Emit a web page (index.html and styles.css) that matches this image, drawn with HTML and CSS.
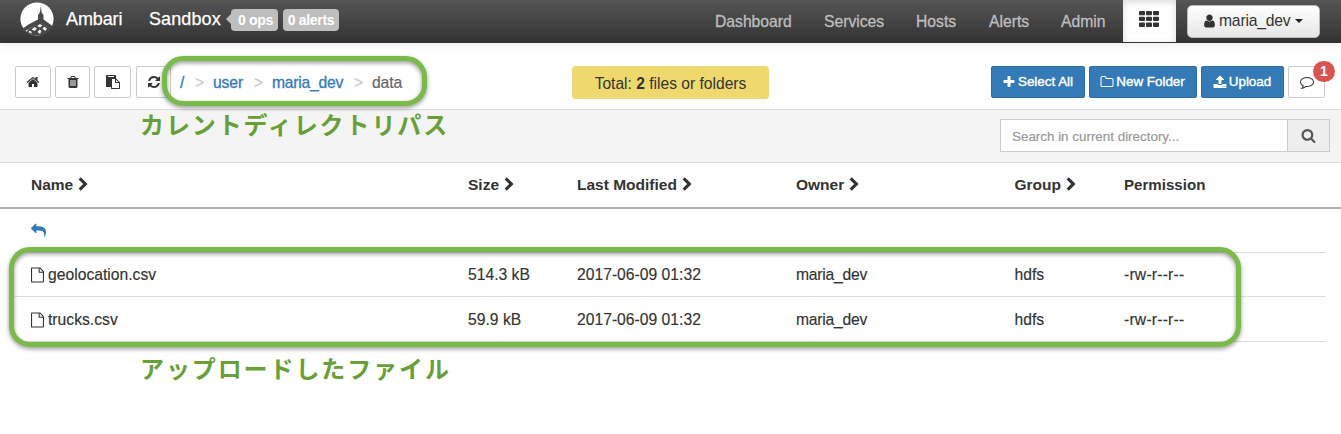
FILE: index.html
```html
<!DOCTYPE html>
<html lang="ja">
<head>
<meta charset="utf-8">
<title>Ambari</title>
<link rel="stylesheet" href="styles.css">
</head>
<body>
<svg class="defs" width="0" height="0">
<symbol id="home" viewBox="0 0 1792 1792"><path d="M1472 992v480q0 26-19 45t-45 19h-384v-384h-256v384h-384q-26 0-45-19t-19-45v-480q0-1 .5-3t.5-3l575-474 575 474q1 2 1 6zm223-69l-62 74q-8 9-21 11h-3q-13 0-21-7l-692-577-692 577q-12 8-24 7-13-2-21-11l-62-74q-8-10-7-23.5t11-21.5l719-599q32-26 76-26t76 26l244 204v-195q0-14 9-23t23-9h192q14 0 23 9t9 23v408l219 182q10 8 11 21.5t-7 23.5z"/></symbol>
<symbol id="trash" viewBox="0 0 1792 1792"><path d="M704 1376v-704q0-14-9-23t-23-9h-64q-14 0-23 9t-9 23v704q0 14 9 23t23 9h64q14 0 23-9t9-23zm256 0v-704q0-14-9-23t-23-9h-64q-14 0-23 9t-9 23v704q0 14 9 23t23 9h64q14 0 23-9t9-23zm256 0v-704q0-14-9-23t-23-9h-64q-14 0-23 9t-9 23v704q0 14 9 23t23 9h64q14 0 23-9t9-23zm-544-992h448l-48-117q-7-9-17-11h-317q-10 2-17 11zm928 32v64q0 14-9 23t-23 9h-96v948q0 83-47 143.5t-113 60.5h-832q-66 0-113-58.5t-47-141.5v-952h-96q-14 0-23-9t-9-23v-64q0-14 9-23t23-9h309l70-167q15-37 54-63t79-26h320q40 0 79 26t54 63l70 167h309q14 0 23 9t9 23z"/></symbol>
<symbol id="paste" viewBox="0 0 1792 1792"><path d="M768 1664h896v-640h-416q-40 0-68-28t-28-68v-416h-384v1152zm256-1440v-64q0-13-9.5-22.5t-22.5-9.5h-704q-13 0-22.5 9.5t-9.5 22.5v64q0 13 9.5 22.5t22.5 9.5h704q13 0 22.5-9.5t9.5-22.5zm256 672h299l-299-299v299zm512 128v672q0 40-28 68t-68 28h-960q-40 0-68-28t-28-68v-160h-544q-40 0-68-28t-28-68v-1344q0-40 28-68t68-28h1088q40 0 68 28t28 68v328q21 13 36 28l408 408q28 28 48 76t20 88z"/></symbol>
<symbol id="refresh" viewBox="0 0 1792 1792"><path d="M1639 1056q0 5-1 7-64 268-268 434.5t-478 166.5q-146 0-282.5-55t-243.5-157l-129 129q-19 19-45 19t-45-19-19-45v-448q0-26 19-45t45-19h448q26 0 45 19t19 45-19 45l-137 137q71 66 161 102t187 36q134 0 250-65t186-179q11-17 53-117 8-23 30-23h192q13 0 22.5 9.5t9.5 22.5zm25-800v448q0 26-19 45t-45 19h-448q-26 0-45-19t-19-45 19-45l138-138q-148-137-349-137-134 0-250 65t-186 179q-11 17-53 117-8 23-30 23h-199q-13 0-22.5-9.5t-9.5-22.5v-7q65-268 270-434.5t480-166.5q146 0 284 55.5t245 156.5l130-129q19-19 45-19t45 19 19 45z"/></symbol>
<symbol id="plus" viewBox="0 0 1792 1792"><path d="M1600 736v192q0 40-28 68t-68 28h-416v416q0 40-28 68t-68 28h-192q-40 0-68-28t-28-68v-416h-416q-40 0-68-28t-28-68v-192q0-40 28-68t68-28h416v-416q0-40 28-68t68-28h192q40 0 68 28t28 68v416h416q40 0 68 28t28 68z"/></symbol>
<symbol id="folder" viewBox="0 0 1792 1792"><path d="M1600 1312v-704q0-40-28-68t-68-28h-704q-40 0-68-28t-28-68v-64q0-40-28-68t-68-28h-320q-40 0-68 28t-28 68v960q0 40 28 68t68 28h1216q40 0 68-28t28-68zm128-704v704q0 92-66 158t-158 66h-1216q-92 0-158-66t-66-158v-960q0-92 66-158t158-66h320q92 0 158 66t66 158v32h672q92 0 158 66t66 158z"/></symbol>
<symbol id="upload" viewBox="0 0 1792 1792"><path d="M1344 1472q0-26-19-45t-45-19-45 19-19 45 19 45 45 19 45-19 19-45zm256 0q0-26-19-45t-45-19-45 19-19 45 19 45 45 19 45-19 19-45zm128-224v320q0 40-28 68t-68 28h-1472q-40 0-68-28t-28-68v-320q0-40 28-68t68-28h427q21 56 70.5 92t110.5 36h256q61 0 110.5-36t70.5-92h427q40 0 68 28t28 68zm-325-648q-17 40-59 40h-256v448q0 26-19 45t-45 19h-256q-26 0-45-19t-19-45v-448h-256q-42 0-59-40-17-39 14-69l448-448q18-19 45-19t45 19l448 448q31 30 14 69z"/></symbol>
<symbol id="search" viewBox="0 0 1792 1792"><path d="M1216 832q0-185-131.5-316.5t-316.5-131.5-316.5 131.5-131.5 316.5 131.5 316.5 316.5 131.5 316.5-131.5 131.5-316.5zm512 832q0 52-38 90t-90 38q-54 0-90-38l-343-342q-179 124-399 124-143 0-273.5-55.5t-225-150-150-225-55.5-273.5 55.5-273.5 150-225 225-150 273.5-55.5 273.5 55.5 225 150 150 225 55.5 273.5q0 220-124 399l343 343q37 37 37 90z"/></symbol>
<symbol id="comment" viewBox="0 0 1792 1792"><path d="M896 384q-204 0-381.5 69.5t-282 187.5-104.5 255q0 112 71.5 213.5t201.5 175.5l87 50-27 96q-24 91-70 172 152-63 275-171l43-38 57 6q69 8 130 8 204 0 381.5-69.5t282-187.5 104.5-255-104.5-255-282-187.5-381.5-69.5zm896 512q0 174-120 321.5t-326 233-450 85.5q-70 0-145-8-198 175-460 242-49 14-114 22h-5q-15 0-27-10.5t-16-27.5v-1q-3-4-.5-12t2-10 4.5-9.5l6-9 7-8.5 8-9q7-8 31-34.5t34.5-38 31-39.5 32.5-51 27-59 26-76q-157-89-247.5-220t-90.5-281q0-174 120-321.5t326-233 450-85.5 450 85.5 326 233 120 321.5z"/></symbol>
<symbol id="user" viewBox="0 0 1792 1792"><path d="M1536 1399q0 109-62.5 187t-150.5 78h-854q-88 0-150.5-78t-62.5-187q0-85 8.5-160.5t31.5-152 58.5-131 94-89 134.5-34.5q131 128 313 128t313-128q76 0 134.5 34.5t94 89 58.5 131 31.5 152 8.5 160.5zm-256-887q0 159-112.5 271.5t-271.5 112.5-271.5-112.5-112.5-271.5 112.5-271.5 271.5-112.5 271.5 112.5 112.5 271.5z"/></symbol>
<symbol id="reply" viewBox="0 0 1792 1792"><path d="M1792 1120q0 166-127 451-3 7-10.5 24t-13.5 30-13 22q-12 17-28 17-15 0-23.5-10t-8.5-25q0-9 2.5-26.5t2.5-23.5q5-68 5-123 0-101-17.5-181t-48.5-138.5-80-101-105.5-69.5-133-42.5-154-21.5-175.5-6h-224v256q0 26-19 45t-45 19-45-19l-512-512q-19-19-19-45t19-45l512-512q19-19 45-19t45 19 19 45v256h224q713 0 875 403 53 134 53 333z"/></symbol>
<symbol id="file" viewBox="128 0 1536 1792"><path d="M1596 380q28 28 48 76t20 88v1152q0 40-28 68t-68 28h-1344q-40 0-68-28t-28-68v-1600q0-40 28-68t68-28h896q40 0 88 20t76 48zm-444-244v376h376q-10-29-22-41l-313-313q-12-12-41-22zm384 1528v-1024h-416q-40 0-68-28t-28-68v-416h-768v1536h1280z"/></symbol>
<symbol id="chev" viewBox="0 0 10 14"><path d="M.6 2.4 2.8.3 9.6 7 2.8 13.7.6 11.600 5.200 7z"/></symbol>
<symbol id="grid" viewBox="0 0 20 16"><path d="M1 0h4a1 1 0 0 1 1 1v2.300a1 1 0 0 1-1 1H1a1 1 0 0 1-1-1V1a1 1 0 0 1 1-1zM8 0h4a1 1 0 0 1 1 1v2.300a1 1 0 0 1-1 1H8a1 1 0 0 1-1-1V1a1 1 0 0 1 1-1zM15 0h4a1 1 0 0 1 1 1v2.300a1 1 0 0 1-1 1h-4a1 1 0 0 1-1-1V1a1 1 0 0 1 1-1zM1 5.800h4a1 1 0 0 1 1 1v2.300a1 1 0 0 1-1 1H1a1 1 0 0 1-1-1V6.800a1 1 0 0 1 1-1zM8 5.800h4a1 1 0 0 1 1 1v2.300a1 1 0 0 1-1 1H8a1 1 0 0 1-1-1V6.800a1 1 0 0 1 1-1zM15 5.800h4a1 1 0 0 1 1 1v2.300a1 1 0 0 1-1 1h-4a1 1 0 0 1-1-1V6.800a1 1 0 0 1 1-1zM1 11.600h4a1 1 0 0 1 1 1v2.300a1 1 0 0 1-1 1H1a1 1 0 0 1-1-1v-2.300a1 1 0 0 1 1-1zM8 11.600h4a1 1 0 0 1 1 1v2.300a1 1 0 0 1-1 1H8a1 1 0 0 1-1-1v-2.300a1 1 0 0 1 1-1zM15 11.600h4a1 1 0 0 1 1 1v2.300a1 1 0 0 1-1 1h-4a1 1 0 0 1-1-1v-2.300a1 1 0 0 1 1-1z"/></symbol>
</svg>

<header class="navbar">
  <svg class="logo" viewBox="0 0 34 34">
    <circle cx="17" cy="17" r="16.600" fill="#fff"/>
    <path d="M20.900 4 21.600 10.500 23.500 13v4.500L32.500 24l-1.500 3-9.500-6.500L10 26l-6 4-2-3 6.500-4.500 9.500-5V13l1.900-2.500z" fill="#484848"/>
    <path d="M21 20 31 26.500l-3.500 4L22 33.500h-8L6 30.500l3-4 6-3.500z" fill="#484848"/>
    <path d="m20 22 2.500 1.500L20 25.500l-3-1.500zM14.500 25l2.500 1.500-2.500 2.500-3-1.500zM24 24.500l3 2-1.500 2.500-3-2zM19.500 27.500l2 1.500-1.500 3-2.500-2zM9.500 28.500l2.500 1.500-1 1.500-2.500-1.500z" fill="#eee"/>
  </svg>
  <span class="brand">Ambari</span>
  <span class="cluster">Sandbox</span>
  <span class="label ops">0 ops</span>
  <span class="label">0 alerts</span>
  <nav class="links">
    <a class="dash">Dashboard</a><a class="serv">Services</a><a class="host">Hosts</a><a class="alrt">Alerts</a><a class="admn">Admin</a>
  </nav>
  <div class="views"><svg><use href="#grid"/></svg></div>
  <button class="account"><svg><use href="#user"/></svg><span>maria_dev</span><i class="caret"></i></button>
</header>

<section class="toolbar">
  <div class="tools">
    <button class="btn b1"><svg><use href="#home"/></svg></button>
    <button class="btn b2"><svg><use href="#trash"/></svg></button>
    <button class="btn b3"><svg><use href="#paste"/></svg></button>
    <button class="btn b4"><svg><use href="#refresh"/></svg></button>
  </div>
  <div class="crumbs"><a class="root">/</a><i>&gt;</i><a class="c-user">user</a><i>&gt;</i><a class="c-maria">maria_dev</a><i>&gt;</i><span>data</span></div>
  <div class="total"><span>Total: <b>2</b> files or folders</span></div>
  <div class="actions">
    <button class="btn primary sel"><svg><use href="#plus"/></svg>Select All</button>
    <button class="btn primary fold"><svg><use href="#folder"/></svg>New Folder</button>
    <button class="btn primary upl"><svg><use href="#upload"/></svg>Upload</button>
    <button class="btn msg"><svg><use href="#comment"/></svg><em class="badge">1</em></button>
  </div>
  <div class="callout callout-path"></div>
</section>

<section class="searchbar">
  <p class="note note-path">カレントディレクトリパス</p>
  <div class="search"><span class="field">Search in current directory...</span><span class="addon"><svg><use href="#search"/></svg></span></div>
</section>

<main class="files">
  <div class="row head">
    <span>Name<svg><use href="#chev"/></svg></span><span>Size<svg><use href="#chev"/></svg></span><span>Last Modified<svg><use href="#chev"/></svg></span><span>Owner<svg><use href="#chev"/></svg></span><span>Group<svg><use href="#chev"/></svg></span><span class="perm">Permission</span>
  </div>
  <div class="list">
    <div class="row up"><svg><use href="#reply"/></svg></div>
    <div class="row first"><span><svg><use href="#file"/></svg>geolocation.csv</span><span>514.3 kB</span><span>2017-06-09 01:32</span><span class="owner">maria_dev</span><span>hdfs</span><span class="mode">-rw-r--r--</span></div>
    <div class="row second"><span><svg><use href="#file"/></svg>trucks.csv</span><span>59.9 kB</span><span>2017-06-09 01:32</span><span class="owner">maria_dev</span><span>hdfs</span><span class="mode">-rw-r--r--</span></div>
    <div class="callout callout-files"></div>
  </div>
  <p class="note note-files">アップロードしたファイル</p>
</main>
</body>
</html>
```
FILE: styles.css
```css
* { box-sizing: border-box; }
body { margin: 0; height: 434px; overflow: hidden; background: #fff; color: #333; font-family: "Liberation Sans", Arial, sans-serif; font-size: 15.700px; }
svg { fill: currentColor; flex: none; }
.defs { position: absolute; }
button { font-family: inherit; margin: 0; }
p { margin: 0; }
span, a { white-space: nowrap; }

.navbar { position: relative; display: flex; align-items: center; height: 43px; padding: 0 21px 4px 20px; background: linear-gradient(#555, #333); box-shadow: 0 1px 8px rgba(0,0,0,.1); color: #fff; }
.logo { width: 34px; height: 34px; margin-top: -2px; }
.brand { width: 83px; margin-left: 12px; font-size: 18px; letter-spacing: -.1px; -webkit-text-stroke: .25px; }
.cluster { width: 82px; font-size: 18px; letter-spacing: .1px; -webkit-text-stroke: .25px; }
.label { height: 22px; width: 56px; border-radius: 4px; background: #bebebe; font-size: 14px; font-weight: bold; line-height: 23px; text-align: center; letter-spacing: -.3px; }
.ops { position: relative; width: 47px; margin-right: 5px; padding-left: 2px; }
.ops::before { content: ""; position: absolute; left: -5px; top: 5px; border: 5px solid transparent; border-left: 0; border-right-color: #bebebe; }
.links { display: flex; margin-left: auto; padding-top: 5px; color: #bebebe; }
.links a { height: 20px; line-height: 20px; -webkit-text-stroke: .3px; }
.dash { width: 109px; }
.serv { width: 92px; }
.host { width: 73px; }
.alrt { width: 72px; }
.admn { width: 62px; }
.views { align-self: flex-start; width: 53px; height: 42px; padding: 11px 0 0 16px; background: #fff; box-shadow: inset 0 2px 7px rgba(0,0,0,.15); color: #333; }
.views svg { display: block; width: 20px; height: 16px; }
.account { display: flex; align-items: center; width: 133px; height: 33px; margin: 3px 0 0 11px; padding: 0 0 0 14px; border: 1px solid #bbb; border-radius: 5px; background: linear-gradient(#fff, #e6e6e6); color: #333; font-size: 15.700px; letter-spacing: -.2px; }
.account svg { width: 15px; height: 16px; margin-right: 2px; }
.caret { margin-left: 5px; border: 4px solid transparent; border-top: 4px solid #222; border-bottom: 0; }

.toolbar { position: relative; display: flex; height: 67px; padding: 23px 0 0 15px; border-bottom: 1px solid #ddd; }
.tools, .actions { display: flex; }
.btn { display: flex; align-items: center; justify-content: center; height: 32px; padding: 0 0 1px; border: 1px solid #ccc; border-radius: 2px; background: #fff; color: #333; font-size: 13.400px; }
.btn svg { width: 14px; height: 14px; }
.b1 { width: 36px; margin-right: 4px; }
.b2 { width: 35px; margin-right: 4px; }
.b3 { width: 37px; margin-right: 5px; }
.b4 { width: 35px; }
.crumbs { display: flex; width: 236px; height: 32px; margin-left: 9px; line-height: 33px; color: #666; letter-spacing: -.1px; }
.crumbs a { color: #337ab7; -webkit-text-stroke: .3px; }
.crumbs span { -webkit-text-stroke: .2px; }
.crumbs i { width: 18px; color: #ccc; font-style: normal; -webkit-text-stroke: .3px; }
.root { width: 15px; }
.c-user { width: 41px; }
.c-maria { width: 82px; letter-spacing: -.25px; }
.total { width: 197px; height: 33px; margin-left: 156px; border: 1px solid #eed781; border-radius: 3px; background: #efd96f; line-height: 33px; text-align: center; font-size: 15.600px; }
.actions { margin: 0 16px 0 auto; }
.primary { border-color: #2e6da4; background: #337ab7; color: #fff; -webkit-text-stroke: .4px; }
.primary svg { margin: 0 2px 0 -1px; stroke: none; }
.sel { width: 94px; margin-right: 4px; }
.fold { width: 108px; margin-right: 4px; }
.upl { width: 83px; margin-right: 4px; }
.msg { position: relative; width: 37px; }
.badge { position: absolute; left: 24px; top: -6px; width: 22px; height: 21px; border-radius: 11px; background: #d9534f; color: #fff; font: bold 14px/20px "Liberation Sans", sans-serif; text-align: center; }
.callout { position: absolute; border: 5px solid #7aba4a; border-radius: 21px; filter: drop-shadow(0 2px 2px rgba(0,0,0,.4)); }
.callout-path { left: 162px; top: 13px; width: 265px; height: 50px; }

.searchbar { display: flex; justify-content: space-between; height: 53px; padding: 9px 11px 0 140px; border-bottom: 1px solid #ddd; background: #f4f4f4; }
.note { color: #689f38; font: 700 24px/32px "Noto Sans CJK JP", sans-serif; letter-spacing: 1.900px; white-space: nowrap; }
.note-path { margin-top: -11px; }
.search { display: flex; width: 330px; height: 33px; border: 1px solid #ccc; background: #fff; }
.field { flex: 1; padding-left: 11px; color: #999; font-size: 13.400px; line-height: 33px; -webkit-text-stroke: .2px; }
.addon { display: flex; align-items: center; justify-content: center; width: 42px; border-left: 1px solid #ccc; background: #eee; color: #555; }
.addon svg { width: 15px; height: 15px; }

.row { display: grid; grid-template-columns: 437px 109px 219px 218.500px 109.500px 1fr; align-items: center; height: 45px; padding-left: 16px; border-bottom: 1px solid #ddd; -webkit-text-stroke: .15px; }
.row span { display: flex; align-items: center; }
.head { height: 46px; padding: 0 0 0 31px; border-bottom: 2px solid #b3b3b3; font-weight: bold; font-size: 15.500px; -webkit-text-stroke: 0; }
.head svg { width: 10px; height: 14px; margin: -2px 0 0 5px; }
.head .perm { margin-top: -2px; font-size: 15.100px; }
.owner { letter-spacing: -.25px; }
.mode { letter-spacing: .2px; }
.list { position: relative; margin: 0 15px; }
.up { height: 44px; color: #337ab7; }
.up svg { width: 15px; height: 15px; margin-top: -1px; }
.first { height: 44px; padding-top: 1px; }
.second { padding-top: 2px; }
.list span svg { width: 13px; height: 16px; margin-right: 4px; }
.callout-files { left: -6px; top: 38px; width: 1232px; height: 100px; }
.note-files { margin: 10px 0 0 140px; }
```
